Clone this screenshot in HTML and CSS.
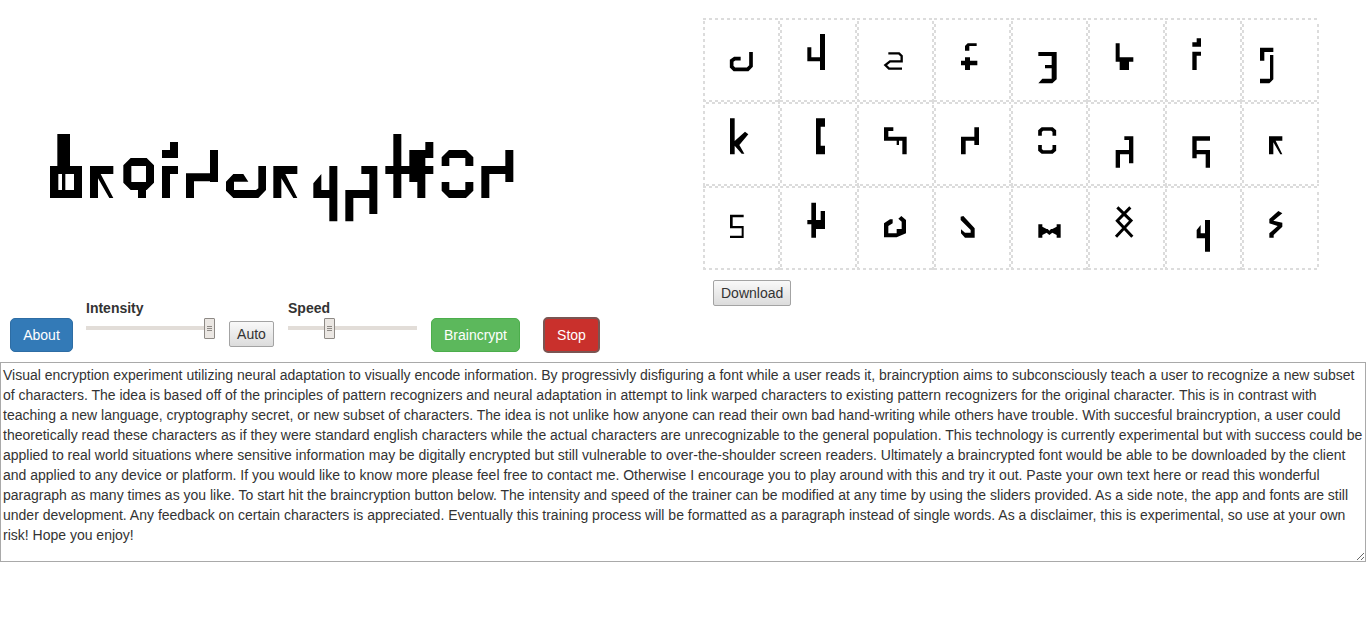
FILE: index.html
```html
<!DOCTYPE html>
<html lang="en">
<head>
<meta charset="utf-8">
<title>Braincrypt</title>
<link rel="stylesheet" href="styles.css">
</head>
<body>
<main class="top">
  <section class="left">
    <svg class="logo" viewBox="50 130 470 95" role="img" aria-label="braincryption logo in warped characters">
      <g transform="translate(30 120) scale(.33333)">
        <path fill-rule="evenodd" d="M82 42H120V138H156V234H60V138H82ZM85 162V210H96V162ZM106 162V210H132V162Z"/>
        <path d="M180 138H250V162H212L250 234H238L204 175V234H180Z"/>
        <path fill-rule="evenodd" d="M302 114H350L372 136V188L350 210H348V234H324V210H302L280 188V136ZM304 138V186H348V138Z"/>
        <path d="M420 66H444V114H396V90H420ZM396 138H444V162H420V234H396Z"/>
        <path d="M540 90H564V186H540V184H492V234H468V160H540Z"/>
        <path d="M610 234H685L708 210V138H685V205L678 210H612V185H655L640 162H610L588 185V212Z"/>
      </g>
      <g transform="translate(270 120) scale(.33333)">
        <path d="M10 138H82V162H46L82 234H70L34 175V234H10Z"/>
        <path d="M178 138H202V304H178V234H130V190L154 162V210H178Z"/>
        <path d="M274 138H322V282H298V234H250V304H226V210H298V162H274Z"/>
        <path d="M370 42H394V138H418V90H466V66H490V114H466V138H490V162H466V234H442V186H418V162H394V234H370V162H346V138H370Z"/>
        <path d="M537 90H588L610 112V138H586V114H538V138H515V112ZM515 186H538V210H586V186H610V212L588 234H537L515 212Z"/>
        <path d="M634 138H706V90H730V186H706V162H658V234H634Z"/>
      </g>
    </svg>
    <div class="controls">
      <button class="btn btn-about" type="button">About</button>
      <div class="slider slider-intensity">
        <label class="slider-label" for="intensity">Intensity</label>
        <input class="range" id="intensity" type="range" min="0" max="100" value="100">
      </div>
      <button class="plain plain-auto" type="button">Auto</button>
      <div class="slider slider-speed">
        <label class="slider-label" for="speed">Speed</label>
        <input class="range" id="speed" type="range" min="0" max="100" value="30.5" step="0.5">
      </div>
      <button class="btn btn-brain" type="button">Braincrypt</button>
      <button class="btn btn-stop" type="button">Stop</button>
    </div>
  </section>
  <section class="right">
    <div class="glyphs">
      <div class="cell"><svg class="glyph" viewBox="9 24 231 252"><path class="s11" d="M153 126V168L143 178H103L95 170V152L104 146H122"/></svg></div>
      <div class="cell"><svg class="glyph" viewBox="240 24 231 252"><path d="M360 72H375V180H360V154H322V112H334V142H360Z"/></svg></div>
      <div class="cell"><svg class="glyph" viewBox="471 24 231 252"><path class="s7" d="M565 130H597L605 138V154H570L556 165L567 176H606"/></svg></div>
      <div class="cell"><svg class="glyph" viewBox="702 24 231 252"><path d="M795 122V108L803 100H830V108H808V122ZM795 142H810V152H832V166H810V180H795V166H783V152H795Z"/></svg></div>
      <div class="cell"><svg class="glyph" viewBox="18 24 231 252"><path d="M100 126H155V208L142 220H100L112 206H140V175H120V165H140V138H100Z"/></svg></div>
      <div class="cell"><svg class="glyph" viewBox="249 24 231 252"><path d="M332 100H344V142H385V155H372V180H344V155H332Z"/></svg></div>
      <div class="cell"><svg class="glyph" viewBox="480 24 231 252"><path d="M575 85H588V110H562V97H575ZM562 125H588V137H575V180H562Z"/></svg></div>
      <div class="cell"><svg class="glyph" viewBox="711 24 231 252"><path d="M765 113H805V126H778V152H765ZM795 135H805V208L793 220H765V206H795Z"/></svg></div>

      <div class="cell"><svg class="glyph" viewBox="9 21 231 252"><path d="M90 70H104V138L135 110L145 118L118 150L133 176H125L104 152V178H90Z"/></svg></div>
      <div class="cell"><svg class="glyph" viewBox="240 21 231 252"><path d="M348 70H375V95H362V152H375V178H348Z"/></svg></div>
      <div class="cell"><svg class="glyph" viewBox="471 21 231 252"><path d="M552 97H580V108H565V125H620V178H607V137H597V150H590V137H552Z"/></svg></div>
      <div class="cell"><svg class="glyph" viewBox="702 21 231 252"><path d="M823 97H837V150H823V137H797V178H783V125H823Z"/></svg></div>
      <div class="cell"><svg class="glyph" viewBox="18 21 231 252"><path class="s11" d="M105 122V108L112 102H141L148 108V122M105 150V165L112 171H141L148 165V150"/></svg></div>
      <div class="cell"><svg class="glyph" viewBox="249 21 231 252"><path d="M358 124H385V205H372V178H345V218H332V165H372V135H358Z"/></svg></div>
      <div class="cell"><svg class="glyph" viewBox="480 21 231 252"><path d="M562 124H615V137H575V165H615V218H602V178H575V190H562Z"/></svg></div>
      <div class="cell"><svg class="glyph" viewBox="711 21 231 252"><path d="M792 124H832V137H812L832 178H826L805 142V178H792Z"/></svg></div>

      <div class="cell"><svg class="glyph" viewBox="9 18 231 252"><path d="M90 104H131V112H98V138H131V174H90V167H125V145H90Z"/></svg></div>
      <div class="cell"><svg class="glyph" viewBox="240 18 231 252"><path d="M334 68H348V120H362V93H375V147H348V173H334V133H322V120H334Z"/></svg></div>
      <div class="cell"><svg class="glyph" viewBox="471 18 231 252"><path d="M552 130L570 118H578V130L565 138V160H590V147H605V125L595 116L604 108L618 120V160L590 172H552Z"/></svg></div>
      <div class="cell"><svg class="glyph" viewBox="702 18 231 252"><path d="M782 120V110L790 108L824 145V173H795L783 160V148L795 158H812V150Z"/></svg></div>
      <div class="cell"><svg class="glyph" viewBox="18 18 231 252"><path d="M100 133H112V140L125 147H128L133 152L138 147H142L155 140V133H167V173H155V165L142 158L133 165L125 158L112 165V173H100Z"/></svg></div>
      <div class="cell"><svg class="glyph" viewBox="249 18 231 252"><path class="s9" d="M337 82L378 122L333 170M376 82L337 122L382 170"/></svg></div>
      <div class="cell"><svg class="glyph" viewBox="480 18 231 252"><path d="M600 120H615V215H600V175H575V150L587 135V160H600Z"/></svg></div>
      <div class="cell"><svg class="glyph" viewBox="711 18 231 252"><path d="M820 93L832 100L805 122L832 128V140L806 165V173H793V160L818 138L793 130V117Z"/></svg></div>
    </div>
    <button class="plain plain-download" type="button">Download</button>
  </section>
</main>
<textarea class="source" spellcheck="false">Visual encryption experiment utilizing neural adaptation to visually encode information. By progressivly disfiguring a font while a user reads it, braincryption aims to subconsciously teach a user to recognize a new subset of characters. The idea is based off of the principles of pattern recognizers and neural adaptation in attempt to link warped characters to existing pattern recognizers for the original character. This is in contrast with teaching a new language, cryptography secret, or new subset of characters. The idea is not unlike how anyone can read their own bad hand-writing while others have trouble. With succesful braincryption, a user could theoretically read these characters as if they were standard english characters while the actual characters are unrecognizable to the general population. This technology is currently experimental but with success could be applied to real world situations where sensitive information may be digitally encrypted but still vulnerable to over-the-shoulder screen readers. Ultimately a braincrypted font would be able to be downloaded by the client and applied to any device or platform. If you would like to know more please feel free to contact me. Otherwise I encourage you to play around with this and try it out. Paste your own text here or read this wonderful paragraph as many times as you like. To start hit the braincryption button below. The intensity and speed of the trainer can be modified at any time by using the sliders provided. As a side note, the app and fonts are still under development. Any feedback on certain characters is appreciated. Eventually this training process will be formatted as a paragraph instead of single words. As a disclaimer, this is experimental, so use at your own risk! Hope you enjoy!</textarea>
</body>
</html>
```

FILE: styles.css
```css
* { box-sizing: border-box; }

html, body { margin: 0; background: #fff; }

body {
  font-family: "Liberation Sans", Arial, sans-serif;
  font-size: 14px;
  line-height: 20px;
  color: #333;
  overflow: hidden;
}

.top { display: flex; height: 362px; }

.left { width: 703px; flex: none; }

.logo {
  display: block;
  width: 470px;
  height: 95px;
  margin: 130px 0 73px 50px;
  filter: blur(.6px);
}

.controls { display: flex; align-items: flex-start; padding-left: 10px; }

.btn {
  height: 34px;
  margin-top: 20px;
  padding: 0;
  border: 1px solid transparent;
  border-radius: 5px;
  font: inherit;
  color: #fff;
}

.btn-about { width: 63px; background: #337ab7; border-color: #2e6da4; }

.btn-brain { width: 89px; margin-left: 14px; background: #5cb85c; border-color: #4cae4c; }

.btn-stop {
  width: 57px;
  height: 36px;
  margin: 19px 0 0 23px;
  background: #c9302c;
  border: 2px solid #7a5552;
}

.slider { width: 129px; margin-left: 13px; }

.slider-speed { margin-left: 14px; }

.slider-label { display: block; font-weight: 700; }

.range {
  display: block;
  width: 129px;
  height: 21px;
  margin: 0;
  background: transparent;
  appearance: none;
  -webkit-appearance: none;
}

.range::-webkit-slider-runnable-track {
  height: 21px;
  background: linear-gradient(#e2ddd8, #e2ddd8) 0 8px / 100% 4px no-repeat;
}

.range::-webkit-slider-thumb {
  -webkit-appearance: none;
  width: 11px;
  height: 21px;
  border: 1px solid #8e8a86;
  border-radius: 1px;
  background:
    linear-gradient(#8e8a86, #8e8a86) center 7px / 5px 1px no-repeat,
    linear-gradient(#8e8a86, #8e8a86) center 9px / 5px 1px no-repeat,
    linear-gradient(#8e8a86, #8e8a86) center 11px / 5px 1px no-repeat,
    #ebe7e3;
}

.plain {
  height: 26px;
  padding: 0 7px;
  border: 1px solid #a3a3a3;
  border-radius: 2px;
  background: linear-gradient(#f9f9f9, #dcdcdc);
  font: inherit;
  color: #333;
}

.plain-auto { width: 45px; padding: 0; margin: 23px 0 0 14px; }

.plain-download { display: block; margin: 10px 0 0 10px; }

.right { flex: 1; padding-top: 18px; }

.glyphs {
  display: grid;
  grid-template-columns: repeat(8, 77px);
  grid-auto-rows: 84px;
  width: 616px;
}

.cell {
  --dash: #dcdcdc;
  --x: 0px;
  --y: 0px;
  background:
    repeating-linear-gradient(90deg, var(--dash) 0 3px, transparent 3px 6px) var(--y) 0 / 100% 2px no-repeat,
    repeating-linear-gradient(90deg, var(--dash) 0 3px, transparent 3px 6px) var(--y) 100% / 100% 2px no-repeat,
    repeating-linear-gradient(0deg, var(--dash) 0 3px, transparent 3px 6px) 0 var(--x) / 2px 100% no-repeat,
    repeating-linear-gradient(0deg, var(--dash) 0 3px, transparent 3px 6px) 100% var(--x) / 2px 100% no-repeat;
}

.cell:nth-child(even) { --x: 3px; }

.cell:nth-child(n+9):nth-child(-n+16) { --y: 3px; }

.glyph { display: block; width: 77px; height: 84px; fill: #000; }

.s7, .s9, .s11 { fill: none; stroke: #000; }

.s7 { stroke-width: 7; }

.s9 { stroke-width: 9; }

.s11 { stroke-width: 11; }

.source {
  display: block;
  width: 100%;
  height: 200px;
  padding: 2px;
  border: 1px solid #a9a9a9;
  font: inherit;
  color: #333;
  background: #fff;
}
```
